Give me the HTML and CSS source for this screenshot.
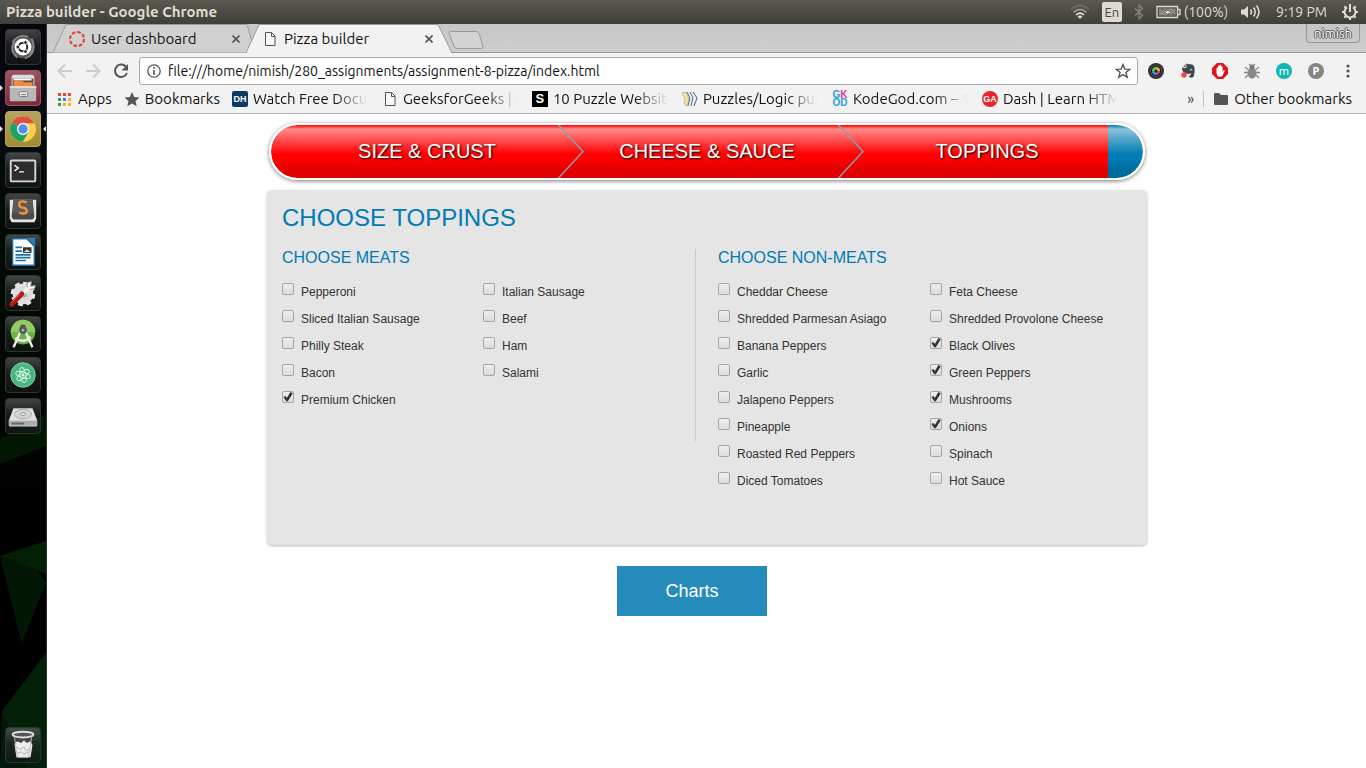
FILE: index.html
```html
<!DOCTYPE html>
<html lang="en">
<head>
<meta charset="utf-8">
<title>Pizza builder</title>
<link rel="stylesheet" href="styles.css">
</head>
<body>
<header class="menubar">
  <h1 class="menubar-title">Pizza builder - Google Chrome</h1>
  <div class="indicators">
    <svg class="ind-wifi" width="20" height="16" viewBox="0 0 20 16" fill="none" stroke-width="1.6"><path d="M1 5.500q9-8 18 0" stroke="#77756d"/><path d="M3.500 8.300q6.500-6 13 0" stroke="#9c9a91"/><path d="M6 11q4-3.600 8 0" stroke="#dfdbd2"/><path d="M7.500 12.500q2.500-2 5 0L10 15z" fill="#dfdbd2"/></svg>
    <span class="lang">En</span>
    <svg class="ind-bt" width="10" height="16" viewBox="0 0 10 16" fill="none" stroke="#85837b" stroke-width="1.300"><path d="M1 4.500l7.500 7L5 15V1l3.500 3.500-7.500 7"/></svg>
    <span class="battery"><svg width="25" height="14" viewBox="0 0 25 14"><path d="M1 1.500h20.500v11H1zM22 4.500h2v5h-2" fill="none" stroke="#dfdbd2" stroke-width="1.300"/><path d="M3 3.500h16.500v7H3z" fill="#8d8b83"/><path d="M5 4l6 2.500-.5-2 7.500 5-6-1.500.5 2z" fill="#fff" stroke="#4a4943" stroke-width=".7"/></svg>(100%)</span>
    <svg width="21" height="16" viewBox="0 0 21 16"><path d="M1 5.500h3L8 2v12l-4-3.500H1z" fill="#dfdbd2"/><path d="M10.500 5.500q2 2.500 0 5M13.500 3.500q3.500 4.500 0 9M16.500 1.500q5 6.500 0 13" fill="none" stroke="#dfdbd2" stroke-width="1.600"/></svg>
    <span class="clock">9:19 PM</span>
    <svg width="18" height="18" viewBox="0 0 18 18" fill="none" stroke="#dfdbd2"><path d="M6 4.300a5.500 5.500 0 1 0 6 0" stroke-width="2"/><path d="M9 1v8" stroke-width="2"/><path d="M1 9h2M15 9h2M3.300 14.700l1.500-1.500M14.700 14.700l-1.500-1.500M9 17v-2M3.300 3.300l1.500 1.500M14.700 3.300l-1.500 1.500" stroke-width="2"/></svg>
  </div>
</header>
<div class="desktop">
  <nav class="launcher" aria-label="Launcher">
    <svg class="wallpaper" viewBox="0 0 47 744" preserveAspectRatio="none"><defs><linearGradient id="wall" x2="0" y2="1"><stop stop-color="#05050a"/><stop offset=".1" stop-color="#0a0a14"/><stop offset=".25" stop-color="#010b04"/><stop offset=".5" stop-color="#020703"/><stop offset=".65" stop-color="#000"/><stop offset="1" stop-color="#000"/></linearGradient></defs><path d="M0 0h47v744H0z" fill="url(#wall)"/><path d="M0 415l47-25v32L0 440z" fill="#021805"/><path d="M0 532l47-15v33L0 532z" fill="#032006"/><path d="M0 532l38 14 9 13-25 60z" fill="#021705"/><path d="M2 687l45-58v115H10z" fill="#032008"/><path d="M2 687l26 57H0z" fill="#03170a"/></svg>
    <button class="tile" aria-label="Search"><svg viewBox="0 0 36 36"><circle cx="18" cy="18" r="12" fill="#555"/><path d="M7 13Q13 4 23 7M29 17q1 10-9 13M12 29Q3 22 9 12M27 9q5 9-1 16" fill="none" stroke="#888" stroke-width="2"/><circle cx="18" cy="18" r="9" fill="#fff"/><circle cx="18" cy="18" r="4.500" fill="none" stroke="#222" stroke-width="2"/><g fill="#222" stroke="#fff"><circle cx="12.500" cy="18" r="2"/><circle cx="20.700" cy="13.200" r="2"/><circle cx="20.700" cy="22.800" r="2"/></g></svg></button>
    <button class="tile tile-files" aria-label="Files"><svg viewBox="0 0 36 36"><path d="M6 7q0-3 3-3h18q3 0 3 3v12H6z" fill="#ddd"/><path d="M7 8h22v8H7z" fill="#5a4a40"/><path d="M8 8h19v2H8z" fill="#fff"/><path d="M8 10h9l2 2h9v4H8z" fill="#f08a3c"/><path d="M4 16h28v15q0 1-1 1H5q-1 0-1-1z" fill="#b8b8b8"/><path d="M4 16h28v2H4z" fill="#ddd"/><rect x="14" y="22" width="9" height="5" rx="1" fill="#eee" stroke="#777"/><path d="M16 25h5" stroke="#666"/></svg></button>
    <button class="tile tile-chrome" aria-label="Chrome"><svg viewBox="0 0 36 36"><circle cx="18" cy="18" r="13.500" fill="#ddd"/><path d="M18 18L6.300 11.200A13.500 13.500 0 0 1 30 12z" fill="#dd5144"/><path d="M18 18L6.300 11.200A13.500 13.500 0 0 0 18 31.500l6-10z" fill="#1da261"/><path d="M18 12h12A13.500 13.500 0 0 1 18 31.500l6-10z" fill="#ffce44"/><circle cx="18" cy="18" r="6.500" fill="#f5f5f5"/><circle cx="18" cy="18" r="5" fill="#4f8ef5"/></svg></button>
    <button class="tile" aria-label="Terminal"><svg viewBox="0 0 36 36"><rect x="5" y="8" width="26" height="22" rx="1" fill="#2b2e2b" stroke="#d8d8d8" stroke-width="2"/><path d="M9 13l4 3-4 3M14 20h5" fill="none" stroke="#fff" stroke-width="1.500"/></svg></button>
    <button class="tile" aria-label="Sublime Text"><svg viewBox="0 0 36 36"><path d="M4 6h28v20l-2 4H6l-2-4z" fill="#e5e5e5"/><path d="M8 5h20l2 18q0 4-3 4H9q-3 0-3-4z" fill="#4b4b4b"/><path d="M8 5h20l1 15H7z" fill="#5a5a5a"/><path d="M22 9q-8-3-8 2 0 3 4 3.500t4 3.500q0 4-8 2" fill="none" stroke="#f5953b" stroke-width="2.500"/></svg></button>
    <button class="tile" aria-label="Writer"><svg viewBox="0 0 36 36"><path d="M7 4h15l8 8v20H7z" fill="#fff" stroke="#1c6da5" stroke-width="1.500"/><path d="M22 3h9v9z" fill="#2b7db5"/><path d="M10 13h7M10 17h7M10 21h16M10 24h16M10 27h11" stroke="#1c72aa" stroke-width="1.800"/><path d="M18 13h9v6h-9z" fill="#333"/><path d="M19 18l3-3 4 3z" fill="#cde"/></svg></button>
    <button class="tile" aria-label="System Settings"><svg viewBox="0 0 36 36"><circle cx="18" cy="19" r="11" fill="#ddd" stroke="#e5e5e5" stroke-width="4" stroke-dasharray="5 3.600"/><circle cx="18" cy="19" r="4" fill="#aaa"/><path d="M14 23L26 10" stroke="#f4f4f4" stroke-width="4"/><path d="M23 12q-3-6 4-6l-1 5 5-1q0 5-6 4" fill="#fff" stroke="#888"/><path d="M6 30L17 19" stroke="#b31c1c" stroke-width="5" stroke-linecap="round"/><path d="M6 28l9-9" stroke="#e65b50"/></svg></button>
    <button class="tile" aria-label="Android Studio"><svg viewBox="0 0 36 36"><circle cx="18" cy="16" r="13" fill="#6ab344"/><path d="M5 16a13 13 0 0 1 26 0z" fill="#91ca60"/><path d="M16 14L8 32M20 14l8 18" stroke="#eee" stroke-width="2.500"/><path d="M10 22q8 7 16-1" fill="none" stroke="#eee" stroke-width="2.500"/><path d="M15 17h6v-6a3 3 0 0 0-6 0z" fill="#555"/><circle cx="18" cy="14" r="4" fill="#555"/><circle cx="18" cy="14" r="1.500" fill="#9b9"/></svg></button>
    <button class="tile" aria-label="Atom"><svg viewBox="0 0 36 36"><circle cx="18" cy="18" r="13" fill="#49b682" stroke="#7fd5aa"/><g fill="none" stroke="#d8f5e6"><ellipse cx="18" cy="18" rx="3" ry="8" transform="rotate(-12 18 18)"/><ellipse cx="18" cy="18" rx="3" ry="8" transform="rotate(48 18 18)"/><ellipse cx="18" cy="18" rx="3" ry="8" transform="rotate(108 18 18)"/></g><circle cx="18" cy="18" r="1.500" fill="#fff"/></svg></button>
    <button class="tile" aria-label="Disk"><svg viewBox="0 0 36 36"><path d="M8 10h20l5 13v5q0 1-1 1H4q-1 0-1-1v-5z" fill="#c9c9c9"/><path d="M8 10h20l5 13H3z" fill="#e0e0e0"/><ellipse cx="18" cy="16" rx="9" ry="5" fill="#d5d5d5" stroke="#aaa"/><ellipse cx="18" cy="16" rx="3" ry="1.500" fill="#eee" stroke="#999"/><path d="M3 23h30v5H3z" fill="#aaa"/><path d="M6 26h13" stroke="#666" stroke-width="2"/></svg></button>
    <button class="tile tile-trash" aria-label="Trash"><svg viewBox="0 0 36 36"><path d="M8 7h20l-3 24H11z" fill="#555" opacity=".6"/><path d="M9 17l3-3 4 2 3-3 3 3 4-2 2 4-2 13H11z" fill="#eee"/><path d="M12 20l3 3 4-3 2 4 4-2M12 27l4-2 3 3 5-3" fill="none" stroke="#aaa"/><ellipse cx="18" cy="7" rx="11" ry="3" fill="#555" stroke="#ddd" stroke-width="2"/><path d="M9 10l3 21h12l3-21" fill="none" stroke="#bbb"/></svg></button>
  </nav>
  <main class="browser">
    <div class="tabstrip">
      <div class="tab"><svg class="tab-shape" viewBox="0 0 202 29" preserveAspectRatio="none"><path d="M0 28.500L13 .5h181l8 28" fill="#d0d0d0" stroke="#9a9a9a"/></svg><svg class="favicon" viewBox="0 0 16 16"><circle cx="8" cy="8" r="7" fill="none" stroke="#e6392e" stroke-width="2" stroke-dasharray="3.600 1.900"/></svg><span class="tab-title">User dashboard</span><button class="close" aria-label="Close tab"><svg viewBox="0 0 8 8"><path d="M.5.500l7 7M7.500.500l-7 7"/></svg></button></div>
      <div class="tab tab-active"><svg class="tab-shape" viewBox="0 0 206 29" preserveAspectRatio="none"><path d="M0 29L13 .5h179L206 29" fill="#f2f2f2" stroke="#9a9a9a"/></svg><svg class="favicon" viewBox="0 0 16 16"><path d="M3.500 1.500h6l3.500 3.500v9.500H3.500zM9.500 1.500v4H13" fill="#f7f7f7" stroke="#555"/></svg><span class="tab-title">Pizza builder</span><button class="close" aria-label="Close tab"><svg viewBox="0 0 8 8"><path d="M.5.500l7 7M7.500.500l-7 7"/></svg></button></div>
      <button class="new-tab" aria-label="New tab"><svg width="36" height="18" viewBox="0 0 36 18"><path d="M3 .5h25q2 0 3 2l4 13q.5 2-2 2H9q-2 0-3-2L1 2.500Q.5.500 3 .5z" fill="#d3d3d3" stroke="#999"/></svg></button>
      <button class="profile">nimish</button>
    </div>
    <div class="toolbar">
      <button class="tool" aria-label="Back"><svg viewBox="0 0 16 16"><path d="M15 8H2M8 1.500L1.500 8 8 14.500" fill="none" stroke="#ccc" stroke-width="2"/></svg></button>
      <button class="tool" aria-label="Forward"><svg viewBox="0 0 16 16"><path d="M1 8h13M8 1.500L14.500 8 8 14.500" fill="none" stroke="#ccc" stroke-width="2"/></svg></button>
      <button class="tool" aria-label="Reload"><svg viewBox="0 0 16 16"><path d="M13.500 4.500A6.200 6.200 0 1 0 14 10" fill="none" stroke="#555" stroke-width="2"/><path d="M15 1v6.500H8.500z" fill="#555"/></svg></button>
      <div class="omnibox">
        <svg width="14" height="14" viewBox="0 0 14 14"><circle cx="7" cy="7" r="6.200" fill="none" stroke="#555" stroke-width="1.300"/><path d="M7 6v5M7 3v1.700" stroke="#555" stroke-width="1.600"/></svg>
        <input class="address" type="text" aria-label="Address" value="file:///home/nimish/280_assignments/assignment-8-pizza/index.html">
        <svg width="16" height="16" viewBox="0 0 16 16"><path d="M8 1.500l1.800 4.600 4.900.3-3.800 3.100 1.300 4.800L8 11.600l-4.200 2.700 1.300-4.800-3.800-3.100 4.900-.3z" fill="none" stroke="#555" stroke-width="1.400"/></svg>
      </div>
      <div class="extensions">
        <svg viewBox="0 0 16 16"><circle cx="8" cy="8" r="8" fill="#333"/><circle cx="8" cy="8" r="6" fill="#444"/><circle cx="8" cy="8" r="4.800" fill="#111"/><path d="M8 4A4 4 0 0 0 4 8h4z" fill="#4bd04b"/><path d="M8 4a4 4 0 0 1 4 4H8z" fill="#f0b429"/><path d="M4 8a4 4 0 0 0 4 4V8z" fill="#2f9be0"/><path d="M12 8a4 4 0 0 1-4 4V8z" fill="#d33b9b"/><circle cx="8" cy="8" r="1.500" fill="#222"/></svg>
        <svg viewBox="0 0 16 16"><path d="M2 5l4-4q1-1 2 0 5 0 6 2 1.500 5-.5 11-4 2-4.500-1l2-1.500V10q-2 2-4 .5Q2 10 2 5z" fill="#40484a"/><path d="M3 4.500h3V1.500" fill="none" stroke="#eee"/><path d="M10 7q2-1.500 2 .5" stroke="#eee" fill="none"/><circle cx="4" cy="12" r="2.700" fill="#f4434c"/></svg>
        <svg viewBox="0 0 16 16"><path d="M5 0h6l5 5v6l-5 5H5l-5-5V5z" fill="#e0131c"/><path d="M4.500 10V5q1-1 1.500 0V3q1-1 1.500 0V2q1-1 1.500 0v1.500q1-1 1.500 0V9l1-2q1.500-.5 1 1l-2 5q-3 1.500-5 0z" fill="#fff"/></svg>
        <svg viewBox="0 0 16 16"><g stroke="#888" stroke-width="1.300" fill="none"><path d="M1 4l3 2.500M15 4l-3 2.500M0 9.500h16M1 15l3-3M15 15l-3-3M5 1l2 2M11 1L9 3"/></g><ellipse cx="8" cy="10" rx="4.500" ry="5.500" fill="#8a8a8a"/><circle cx="8" cy="4" r="2.500" fill="#777"/></svg>
        <span class="ext-badge ext-teal">m</span>
        <span class="ext-badge ext-grey">P</span>
        <svg viewBox="0 0 16 16" fill="#555"><circle cx="8" cy="3" r="1.600"/><circle cx="8" cy="8" r="1.600"/><circle cx="8" cy="13" r="1.600"/></svg>
      </div>
    </div>
    <div class="bookmarks">
      <a class="bm" href="#"><svg class="favicon" viewBox="0 0 16 16"><path d="M1 2h3v3H1z" fill="#e8453c"/><path d="M6 2h3v3H6z" fill="#e8453c"/><path d="M11 2h3v3h-3z" fill="#e8453c"/><path d="M1 7h3v3H1zM1 12h3v3H1z" fill="#2fa058"/><path d="M6 7h3v3H6z" fill="#3b7ded"/><path d="M11 7h3v3h-3zM6 12h3v3H6zM11 12h3v3h-3z" fill="#f9ad12"/></svg>Apps</a>
      <a class="bm" href="#"><svg class="favicon" viewBox="0 0 16 16"><path d="M8 1l2.200 5 5.300.5-4 3.500 1.200 5.300L8 12.500l-4.700 2.800L4.500 10l-4-3.500L5.800 6z" fill="#555"/></svg>Bookmarks</a>
      <a class="bm bm-long" href="#"><span class="fav-text fav-dh">DH</span><span class="bm-text">Watch Free Docu</span></a>
      <a class="bm bm-long" href="#"><svg class="favicon" viewBox="0 0 16 16"><path d="M3.500 1.500h6l3.500 3.500v9.500H3.500zM9.500 1.500v4H13" fill="#f7f7f7" stroke="#555"/></svg><span class="bm-text">GeeksforGeeks | A</span></a>
      <a class="bm bm-long" href="#"><span class="fav-text fav-s">S</span><span class="bm-text">10 Puzzle Website</span></a>
      <a class="bm bm-long" href="#"><svg class="favicon" viewBox="0 0 16 16"><path d="M0 2l4-1 3 7-2 7-3-2 1-5z" fill="#f3e3ad" stroke="#bba860" stroke-width=".7"/><path d="M5 1l3 6-2 8M8 1l3 6-2 8M11 1l4 6-3 8" fill="none" stroke="#3564a0"/><path d="M6 1l3 6-2 8M9 1l3 6-2 8" fill="none" stroke="#e8e0c0"/></svg><span class="bm-text">Puzzles/Logic puz</span></a>
      <a class="bm bm-long" href="#"><span class="fav-text fav-gk"><span>G<b>K</b></span><span>OD</span></span><span class="bm-text">KodeGod.com – 1</span></a>
      <a class="bm bm-long" href="#"><span class="fav-text fav-ga">GA</span><span class="bm-text">Dash | Learn HTM</span></a>
      <div class="bm-end"><button class="more" aria-label="More bookmarks">»</button><span class="sep"></span><a class="bm" href="#"><svg class="favicon" viewBox="0 0 16 16"><path d="M1 3q0-1 1-1h4l2 2h6q1 0 1 1v8q0 1-1 1H2q-1 0-1-1z" fill="#555"/></svg>Other bookmarks</a></div>
    </div>
    <div class="page">
      <ol class="steps">
        <li class="step">SIZE &amp; CRUST<svg class="chevron" viewBox="0 0 26 53"><path d="M.5 0L25 26.500.5 53"/></svg></li>
        <li class="step">CHEESE &amp; SAUCE<svg class="chevron" viewBox="0 0 26 53"><path d="M.5 0L25 26.500.5 53"/></svg></li>
        <li class="step">TOPPINGS</li>
      </ol>
      <form class="panel">
        <h2 class="panel-title">CHOOSE TOPPINGS</h2>
        <div class="groups">
          <section class="group meats">
            <h3 class="group-title">CHOOSE MEATS</h3>
            <div class="options">
              <label class="option"><input type="checkbox">Pepperoni</label>
              <label class="option"><input type="checkbox">Italian Sausage</label>
              <label class="option"><input type="checkbox">Sliced Italian Sausage</label>
              <label class="option"><input type="checkbox">Beef</label>
              <label class="option"><input type="checkbox">Philly Steak</label>
              <label class="option"><input type="checkbox">Ham</label>
              <label class="option"><input type="checkbox">Bacon</label>
              <label class="option"><input type="checkbox">Salami</label>
              <label class="option"><input type="checkbox" checked>Premium Chicken</label>
            </div>
          </section>
          <section class="group non-meats">
            <h3 class="group-title">CHOOSE NON-MEATS</h3>
            <div class="options">
              <label class="option"><input type="checkbox">Cheddar Cheese</label>
              <label class="option"><input type="checkbox">Feta Cheese</label>
              <label class="option"><input type="checkbox">Shredded Parmesan Asiago</label>
              <label class="option"><input type="checkbox">Shredded Provolone Cheese</label>
              <label class="option"><input type="checkbox">Banana Peppers</label>
              <label class="option"><input type="checkbox" checked>Black Olives</label>
              <label class="option"><input type="checkbox">Garlic</label>
              <label class="option"><input type="checkbox" checked>Green Peppers</label>
              <label class="option"><input type="checkbox">Jalapeno Peppers</label>
              <label class="option"><input type="checkbox" checked>Mushrooms</label>
              <label class="option"><input type="checkbox">Pineapple</label>
              <label class="option"><input type="checkbox" checked>Onions</label>
              <label class="option"><input type="checkbox">Roasted Red Peppers</label>
              <label class="option"><input type="checkbox">Spinach</label>
              <label class="option"><input type="checkbox">Diced Tomatoes</label>
              <label class="option"><input type="checkbox">Hot Sauce</label>
            </div>
          </section>
        </div>
      </form>
      <div class="actions"><button class="charts">Charts</button></div>
    </div>
  </main>
</div>
</body>
</html>
```

FILE: styles.css
```css
* { box-sizing: border-box; }
body {
  margin: 0;
  min-height: 100vh;
  display: flex;
  flex-direction: column;
  font: 15px/20px Ubuntu, "Noto Sans", sans-serif;
  color: #111;
  background: #fff;
}
button { font: inherit; padding: 0; border: 0; background: none; color: inherit; }
svg { flex: none; }

/* Desktop top bar */
.menubar {
  height: 24px;
  padding: 0 7px 0 6px;
  display: flex;
  align-items: center;
  justify-content: space-between;
  background: linear-gradient(#5a5850, #3f3e39);
  color: #dfdbd2;
}
.menubar-title { margin: 0; font-size: 15px; font-weight: 700; }
.indicators { display: flex; align-items: center; gap: 12px; font-size: 14px; }
.lang {
  width: 20px;
  height: 20px;
  border-radius: 2px;
  background: #dfdbd2;
  color: #44433d;
  font-size: 13px;
  text-align: center;
}
.battery { display: flex; align-items: center; gap: 3px; }
.clock { padding: 0 2px 0 3px; }

.desktop { flex: 1; display: flex; }

/* Launcher */
.launcher {
  position: relative;
  width: 47px;
  flex: none;
  padding: 5px 6px 5px 5px;
  display: flex;
  flex-direction: column;
  gap: 5px;
  border-right: 1px solid #333;
  background: #000;
}
.wallpaper { position: absolute; inset: 0; width: 100%; height: 100%; }
.tile {
  position: relative;
  width: 36px;
  height: 36px;
  border-radius: 4px;
  border: 1px solid #2f3431;
  background: linear-gradient(#6a6e6c99, #3a3e3c66 45%, #161917aa);
}
.tile svg { display: block; width: 34px; height: 34px; }
.tile-files { background: linear-gradient(#9a5560, #7b2a39); border-color: #9a5560; }
.tile-chrome { background: linear-gradient(#b5a45c, #a18b2c); border-color: #b5a55f; }
.tile-files::before, .tile-chrome::before, .tile-chrome::after {
  content: "";
  position: absolute;
  top: 14px;
  left: -6px;
  border: 3px solid transparent;
  border-left-color: #ddd;
  border-right-width: 0;
}
.tile-chrome::after { left: auto; right: -6px; border-width: 3px 3px 3px 0; border-right-color: #ddd; }
.tile-trash { margin-top: auto; }

/* Browser chrome */
.browser { flex: 1; min-width: 0; display: flex; flex-direction: column; }
.tabstrip {
  height: 29px;
  padding-left: 6px;
  display: flex;
  align-items: flex-start;
  background: linear-gradient(#c6c6c6, #cdcdcd);
  box-shadow: inset 0 -1px #9a9a9a;
}
.tab {
  position: relative;
  width: 202px;
  height: 29px;
  padding: 0 15px 0 16px;
  display: flex;
  align-items: center;
  gap: 6px;
}
.tab > * { position: relative; }
.tab .tab-shape { position: absolute; inset: 0; width: 100%; height: 100%; }
.tab-active { width: 206px; margin-left: -9px; padding-right: 19px; }
.tab-title { flex: 1; }
.favicon { width: 16px; height: 16px; }
.close { width: 8px; height: 8px; }
.close svg { display: block; fill: none; stroke: #555; stroke-width: 1.6; }
.new-tab { margin: 7px 0 0 -4px; height: 18px; }
.new-tab svg { display: block; }
.profile {
  margin: 0 6px 0 auto;
  width: 54px;
  height: 19px;
  border: 1px solid #999;
  border-top: 0;
  border-radius: 0 0 4px 4px;
  color: #fff;
  font-size: 13px;
  line-height: 18px;
  text-shadow: 1px 0 #555, -1px 0 #555, 0 1px #555, 0 -1px #555;
}
.toolbar {
  height: 35px;
  padding: 0 10px;
  display: flex;
  align-items: center;
  background: #f2f2f2;
}
.tool { width: 28px; height: 16px; padding-right: 12px; }
.tool svg { display: block; width: 16px; height: 16px; }
.omnibox {
  flex: 1;
  height: 28px;
  margin: 1px 10px 0 -2px;
  padding: 0 6px 0 7px;
  display: flex;
  align-items: center;
  gap: 7px;
  border: 1px solid #a8a8a8;
  border-radius: 3px;
  background: #fff;
}
.address { flex: 1; min-width: 0; padding: 0; border: 0; outline: 0; font: 14px/20px Ubuntu, "Noto Sans", sans-serif; color: #111; }
.extensions { display: flex; align-items: center; gap: 16px; }
.extensions > * { width: 16px; height: 16px; }
.ext-badge { border-radius: 50%; color: #fff; text-align: center; font: 11px/15px "Noto Sans", sans-serif; }
.ext-teal { background: #12b5b5; }
.ext-grey { background: #858585; font-weight: 700; }
.bookmarks {
  height: 26px;
  padding: 0 14px 3px 10px;
  display: flex;
  align-items: center;
  gap: 12px;
  background: #f2f2f2;
  border-bottom: 1px solid #b0b0b0;
}
.bm { display: flex; align-items: center; gap: 5px; color: inherit; text-decoration: none; white-space: nowrap; }
.bm-long { flex: 0 0 138px; min-width: 0; }
.bm-text {
  flex: 1;
  min-width: 0;
  overflow: hidden;
  -webkit-mask-image: linear-gradient(90deg, #000 70%, transparent 98%);
  mask-image: linear-gradient(90deg, #000 70%, transparent 98%);
}
.fav-text {
  width: 16px;
  height: 16px;
  flex: none;
  color: #fff;
  text-align: center;
  font: 700 9px/16px "Liberation Sans", sans-serif;
}
.fav-dh { border-radius: 2px; background: #0b3a66; }
.fav-s { background: #000; font-size: 13px; }
.fav-gk { display: flex; flex-direction: column; color: #2a9fdb; font-size: 10px; line-height: 8px; }
.fav-gk b { color: #e0338c; }
.fav-ga { border-radius: 50%; background: #e4252b; }
.bm-end { margin-left: auto; display: flex; align-items: center; gap: 9px; }
.more { color: #444; }
.sep { width: 1px; height: 16px; background: #c0c0c0; }

/* Pizza builder page */
.page {
  flex: 1;
  padding: 9px 16px 16px 17px;
  font-family: "Liberation Sans", Arial, sans-serif;
  background: #fff;
}
.steps {
  max-width: 876px;
  margin: 0 auto 10px;
  padding: 0 16px;
  display: grid;
  grid-template-columns: repeat(3, 1fr);
  list-style: none;
  border: 2px solid #fff;
  border-radius: 29px;
  background:
    linear-gradient(#fff0, #ffffff8c 8%, #fff6 20%, #fff0 55%, #0000 65%, #0000001f 85%, #0000001f),
    linear-gradient(90deg, #f00 96%, #007bb3 96%);
  background-clip: padding-box;
  box-shadow: 0 1px 4px #0008;
}
.step {
  position: relative;
  color: #fff;
  font-size: 20px;
  line-height: 53px;
  text-align: center;
  text-shadow: 1px 1px 2px #000;
}
.chevron {
  position: absolute;
  top: 0;
  right: -17px;
  width: 26px;
  height: 53px;
  fill: none;
  stroke: #8a9fb0;
  stroke-width: 1.5;
}
.panel {
  max-width: 880px;
  min-height: 355px;
  margin: 0 auto;
  padding: 14px 5px 15px 15px;
  border-radius: 5px;
  background: #e5e5e5;
  box-shadow: 0 1px 3px #0004;
}
.panel-title { margin: 0; font-size: 24px; line-height: 28px; font-weight: 400; color: #007bb3; }
.groups { margin-top: 17px; display: grid; grid-template-columns: 414fr 424fr; gap: 22px; align-items: start; }
.meats { min-height: 192px; padding-right: 11px; border-right: 1px solid #c8c8c8; }
.group-title { margin: 0 0 12px; font-size: 16px; line-height: 18px; font-weight: 400; color: #007bb3; }
.options { display: grid; grid-template-columns: 1fr 1fr; }
.option { display: flex; gap: 7px; height: 27px; padding-top: 4px; font-size: 12px; line-height: 18px; color: #333; }
.option input {
  appearance: none;
  flex: none;
  width: 12px;
  height: 12px;
  margin: 0;
  border: 1px solid #a5a5a5;
  border-radius: 2px;
  background: linear-gradient(#eee, #dcdcdc);
}
.option input:checked::before {
  content: "";
  display: block;
  width: 10px;
  height: 10px;
  background: #333;
  clip-path: polygon(5% 50%, 24% 40%, 38% 60%, 75% 0, 98% 12%, 48% 92%, 32% 92%);
}
.actions { margin-top: 21px; padding-right: 30px; text-align: center; }
.charts { width: 150px; height: 50px; background: #258bbb; color: #fff; font-size: 18px; }
```
